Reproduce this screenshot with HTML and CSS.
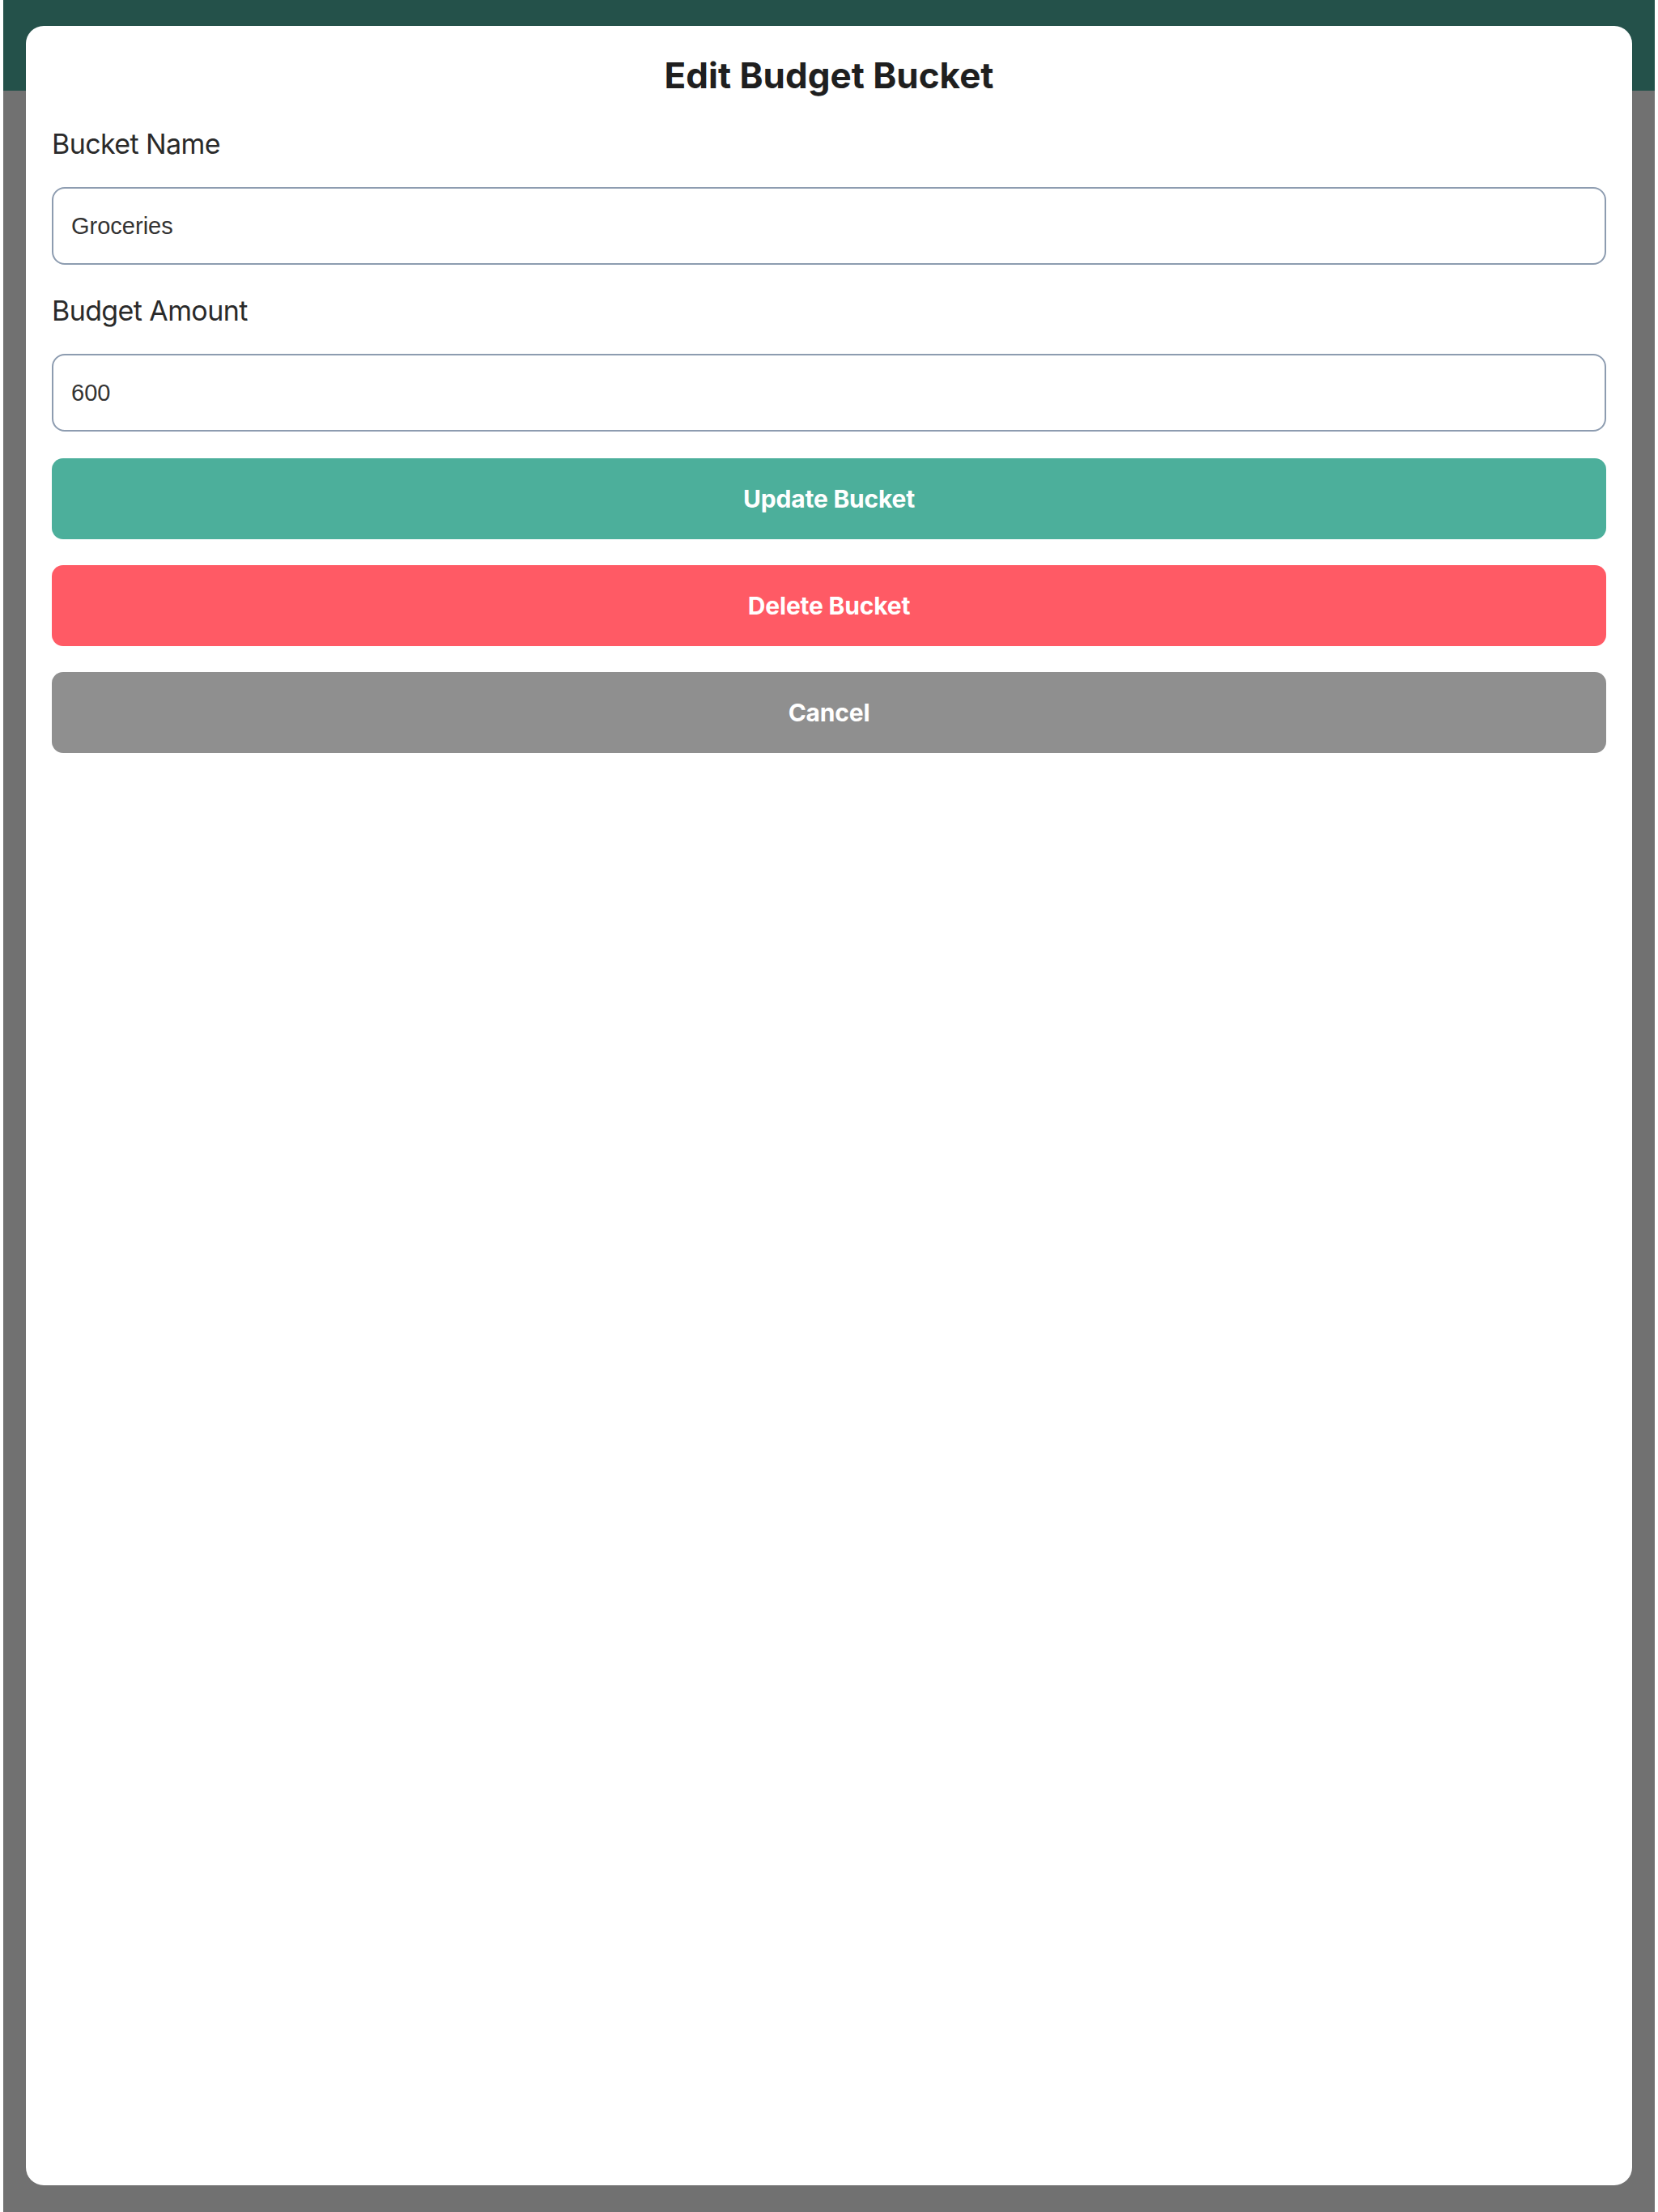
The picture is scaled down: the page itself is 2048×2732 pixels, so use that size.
FILE: index.html
```html
<!DOCTYPE html>
<html lang="en">
<head>
<meta charset="utf-8">
<title>Edit Budget Bucket</title>
<link rel="stylesheet" href="styles.css">
</head>
<body>
  <div class="screen">
    <header class="topbar"></header>

    <div class="modal" role="dialog" aria-labelledby="modal-title">
      <h1 class="modal-title" id="modal-title">Edit Budget Bucket</h1>

      <form class="bucket-form">
        <label class="field-label" for="bucket-name">Bucket Name</label>
        <input class="field-input" id="bucket-name" type="text" value="Groceries">

        <label class="field-label" for="bucket-amount">Budget Amount</label>
        <input class="field-input" id="bucket-amount" type="text" value="600">

        <div class="actions">
          <button type="button" class="btn btn-update">Update Bucket</button>
          <button type="button" class="btn btn-delete">Delete Bucket</button>
          <button type="button" class="btn btn-cancel">Cancel</button>
        </div>
      </form>
    </div>
  </div>
</body>
</html>
```

FILE: styles.css
```css
* {
  box-sizing: border-box;
}

html,
body {
  margin: 0;
  padding: 0;
  background: #ffffff;
}

body {
  font-family: Inter, "Noto Sans", "Liberation Sans", sans-serif;
  color: #222222;
}

/* app frame behind the dialog */
.screen {
  position: relative;
  margin: 0 4px;
  height: 2732px;
  background: #717171;
  overflow: hidden;
}

.topbar {
  height: 112px;
  background: #24514a;
}

/* the dialog sheet */
.modal {
  position: absolute;
  top: 32px;
  left: 28px;
  right: 28px;
  bottom: 33px;
  background: #ffffff;
  border-radius: 22px;
  padding: 35px 32px 32px;
}

.modal-title {
  margin: 0;
  text-align: center;
  font-size: 44px;
  line-height: 53px;
  font-weight: 700;
  letter-spacing: 0;
  color: #1f1f1f;
}

.bucket-form {
  display: flex;
  flex-direction: column;
  margin-top: 37px;
}

.field-label {
  font-size: 34px;
  line-height: 41px;
  font-weight: 400;
  letter-spacing: -0.6px;
  color: #2a2a2a;
  margin-bottom: 33px;
}

.field-input {
  display: block;
  width: 100%;
  height: 96px;
  margin: 0 0 36px;
  padding: 0 22px;
  border: 2px solid #8d9cb0;
  border-radius: 16px;
  background: #ffffff;
  font-family: "Liberation Sans", Arial, sans-serif;
  font-size: 29px;
  color: #333333;
  outline: none;
}

.actions {
  display: flex;
  flex-direction: column;
  gap: 32px;
  margin-top: -3px;
}

.btn {
  display: flex;
  align-items: center;
  justify-content: center;
  width: 100%;
  height: 100px;
  border: none;
  border-radius: 14px;
  font-family: Inter, "Noto Sans", "Liberation Sans", sans-serif;
  font-size: 30px;
  font-weight: 700;
  letter-spacing: -0.2px;
  color: #ffffff;
  cursor: pointer;
}

.btn-update {
  background: #4caf9b;
}

.btn-delete {
  background: #ff5a65;
}

.btn-cancel {
  background: #8f8f8f;
}
```
